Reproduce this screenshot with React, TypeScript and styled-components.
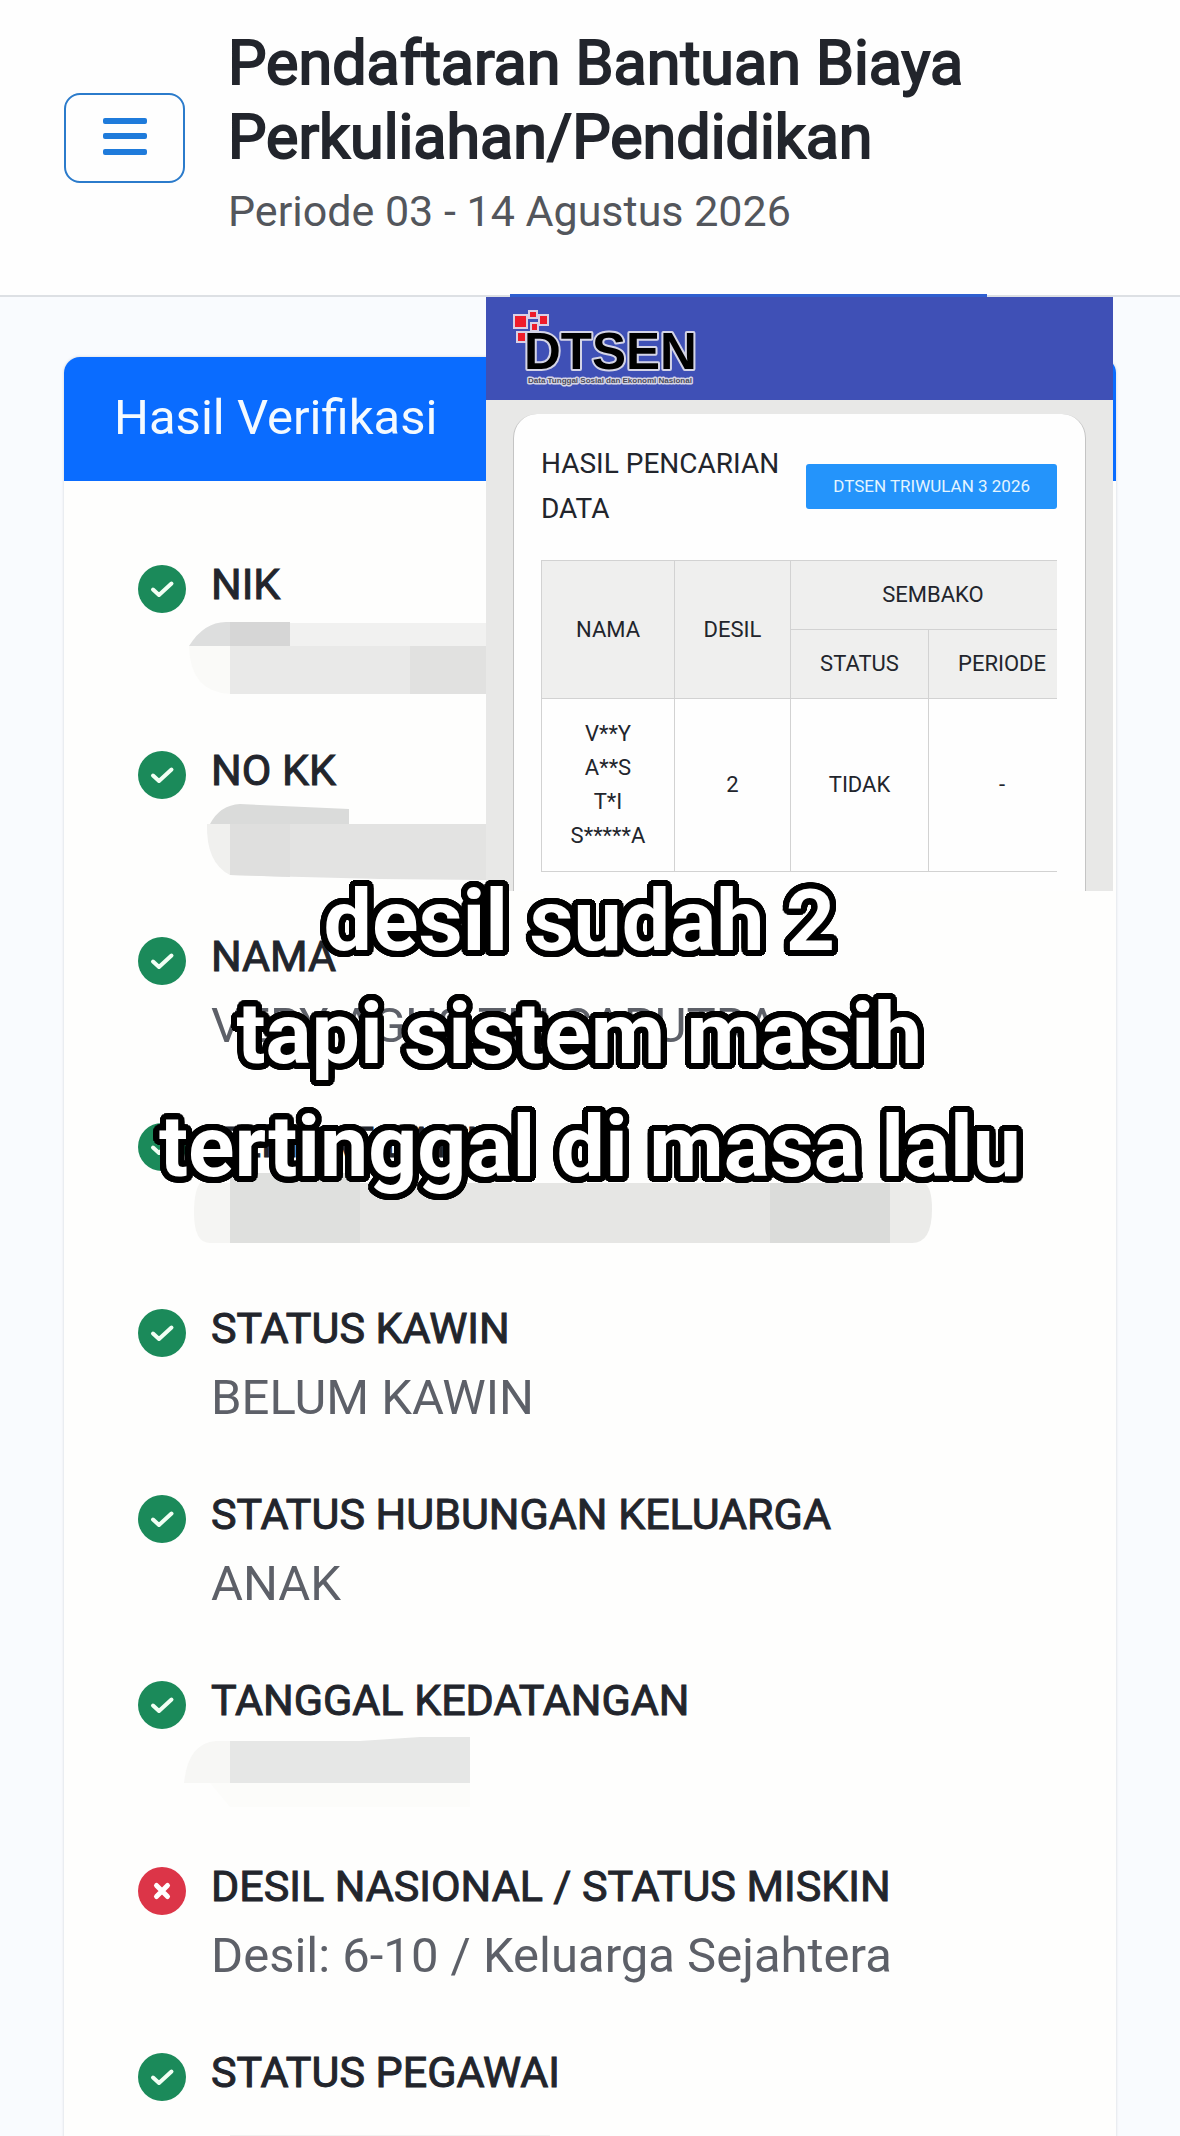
import React from "react";
import styled, { createGlobalStyle, css } from "styled-components";

const GlobalStyle = createGlobalStyle`
  *, *::before, *::after { box-sizing: border-box; }
  body {
    margin: 0;
    background: #f9fbfe;
    color: #22252c;
    font-family: Roboto, "Liberation Sans", sans-serif;
  }
`;

const Page = styled.div`
  position: relative;
  height: 100vh;
  overflow: hidden;
`;

const TopBar = styled.header`
  display: flex;
  align-items: center;
  gap: 43px;
  padding: 26px 64px 46px;
  background: #fefefe;
  border-bottom: 2px solid #dde0e4;
`;

const MenuButton = styled.button`
  display: flex;
  align-items: center;
  justify-content: center;
  flex: none;
  width: 121px;
  height: 90px;
  padding: 0;
  border: 2px solid #2b7bcb;
  border-radius: 16px;
  background: #fefefe;
  color: #1f7bdb;
`;

const Title = styled.h1`
  margin: 0;
  max-width: 800px;
  font-size: 61px;
  font-weight: 400;
  line-height: 74px;
  -webkit-text-stroke: 2px currentColor;
`;

const Subtitle = styled.p`
  margin: 0;
  font-size: 43px;
  line-height: 75px;
  color: #53565c;
`;

const Main = styled.main`
  position: relative;
  padding: 60px 64px;
`;

const Card = styled.section`
  border-radius: 16px;
  background: #fefefd;
  box-shadow: 0 0 3px #cfd3da;
`;

const CardHeader = styled.h2`
  margin: 0;
  padding: 24px 50px 26px;
  border-radius: 16px 16px 0 0;
  background: #0a6cff;
  color: #f4faff;
  font-size: 49px;
  font-weight: 400;
  line-height: 74px;
`;

const List = styled.ul`
  display: flex;
  flex-direction: column;
  gap: 48px;
  margin: 0;
  padding: 74px;
  list-style: none;
`;

const Item = styled.li`
  display: flex;
  gap: 25px;
`;

const StatusIcon = styled.svg`
  flex: none;
  width: 48px;
  height: 48px;
  margin-top: 10px;
`;

const ItemLabel = styled.div`
  font-size: 43px;
  font-weight: 400;
  line-height: 58px;
  white-space: nowrap;
  -webkit-text-stroke: 1px currentColor;
`;

const ItemValue = styled.div`
  position: relative;
  height: 80px;
  font-size: 49px;
  line-height: 82px;
  color: #5d6068;
  white-space: nowrap;
`;

const Smudge = styled.svg`
  position: absolute;
  top: -6px;
  left: -31px;
  width: 780px;
  height: 98px;
`;

const Panel = styled.aside`
  position: absolute;
  top: 0;
  left: 486px;
  right: 67px;
  height: 594px;
  display: flex;
  flex-direction: column;
  background: #e8e8e7;

  &::before {
    content: "";
    position: absolute;
    top: -3px;
    left: 24px;
    right: 126px;
    height: 3px;
    background: #2f5fd0;
  }
`;

const PanelBar = styled.div`
  flex: none;
  height: 103px;
  padding: 13px 26px;
  background: #3f50b6;
`;

const Logo = styled.svg`
  display: block;
  width: 190px;
  height: 80px;
  font-family: "Liberation Sans", Arial, sans-serif;
  font-weight: 700;
`;

const ResultCard = styled.div`
  flex: 1;
  margin: 14px 27px 0 27px;
  padding: 27px 28px 0 27px;
  border: 1px solid #c4c4c4;
  border-width: 0 1px;
  border-radius: 24px 24px 0 0;
  background: #fefefe;
`;

const ResultHead = styled.div`
  display: flex;
  align-items: center;
  justify-content: space-between;
  gap: 20px;
`;

const ResultTitle = styled.h3`
  margin: 0;
  font-size: 28px;
  font-weight: 400;
  line-height: 45px;
`;

const PeriodButton = styled.button`
  flex: none;
  height: 45px;
  padding: 0 27px;
  border: 0;
  border-radius: 3px;
  background: #2494fb;
  color: #e3f5ff;
  font-family: inherit;
  font-size: 17px;
`;

const TableScroll = styled.div`
  margin-top: 29px;
  overflow: hidden;
`;

const Table = styled.table`
  width: 534px;
  table-layout: fixed;
  border-collapse: collapse;
  font-size: 22px;
  line-height: 34px;
  text-align: center;
`;

const cell = css`
  border: 1px solid #d2d2d2;
  font-weight: 400;
`;

const Th = styled.th`
  ${cell}
  padding: 17px 0;
  background: #efefee;
`;

const Td = styled.td`
  ${cell}
  padding: 18px 0;
`;

const NameCell = styled(Td)`
  white-space: pre-line;
`;

const outline = (radius: number, color: string) =>
  Array.from({ length: 48 }, (_, i) => {
    const angle = (i * Math.PI) / 24;
    const x = Math.round(Math.cos(angle) * radius);
    const y = Math.round(Math.sin(angle) * radius);
    return `${x}px ${y}px 0 ${color}`;
  }).join(", ");

const Caption = styled.p`
  position: absolute;
  top: 864px;
  left: 0;
  right: 0;
  margin: 0;
  color: #fff;
  font-size: 86px;
  font-weight: 700;
  line-height: 113px;
  text-align: center;
  white-space: pre;
  text-shadow: ${outline(6, "#000")}, ${outline(3, "#000")};
`;

const smudges: Record<string, React.ReactNode> = {
  nik: (
    <>
      <path d="M9 39 Q24 15 46 15 H110 V39 Z" fill="#dddede" />
      <path d="M50 15 H110 V39 H50 Z" fill="#d6d6d6" />
      <path d="M110 16 H420 V39 H110 Z" fill="#f1f1f0" />
      <path d="M9 39 H50 V87 Q10 85 9 39 Z" fill="#fafaf8" />
      <path d="M50 39 H230 V87 H50 Z" fill="#e9e9e8" />
      <path d="M230 39 H420 V87 H230 Z" fill="#e1e1e0" />
    </>
  ),
  kk: (
    <>
      <path d="M30 31 Q40 12 60 11 L169 16 V31 Z" fill="#dadbda" />
      <path d="M27 31 H50 V82 Q26 70 27 31 Z" fill="#f0f0ee" />
      <path d="M50 31 H420 V88 L200 86 L50 82 Z" fill="#e3e3e2" />
      <path d="M50 31 H110 V84 L50 82 Z" fill="#dfdfde" />
    </>
  ),
  long: (
    <>
      <path d="M20 18 H50 V78 H30 Q14 78 14 48 Q14 26 20 18 Z" fill="#f5f5f3" />
      <path d="M50 8 H180 V78 H50 Z" fill="#dfe0de" />
      <path d="M180 18 H590 V78 H180 Z" fill="#e6e6e4" />
      <path d="M590 18 H710 V78 H590 Z" fill="#dbdcda" />
      <path d="M710 18 H744 Q752 22 752 44 Q752 78 732 78 H710 Z" fill="#ebebe9" />
    </>
  ),
  short: (
    <>
      <path d="M4 60 Q8 20 36 18 H50 V60 Z" fill="#f7f7f5" />
      <path d="M50 18 H180 L240 14 H290 V60 H50 Z" fill="#e6e7e6" />
      <path d="M30 60 H290 V84 H50 Z" fill="#fcfcfa" />
    </>
  ),
  last: <path d="M50 40 H370 V70 H50 Z" fill="#f2f2f0" />,
};

type Row = { label: string; value?: string; smudge?: string; failed?: boolean };

const rows: Row[] = [
  { label: "NIK", smudge: "nik" },
  { label: "NO KK", smudge: "kk" },
  { label: "NAMA", value: "VERY AGUS TRI SAPUTRA" },
  { label: "TEMPAT LAHIR", smudge: "long" },
  { label: "STATUS KAWIN", value: "BELUM KAWIN" },
  { label: "STATUS HUBUNGAN KELUARGA", value: "ANAK" },
  { label: "TANGGAL KEDATANGAN", smudge: "short" },
  { label: "DESIL NASIONAL / STATUS MISKIN", value: "Desil: 6-10 / Keluarga Sejahtera", failed: true },
  { label: "STATUS PEGAWAI", smudge: "last" },
];

const Status = ({ failed }: { failed?: boolean }) => (
  <StatusIcon viewBox="0 0 48 48" fill="none" strokeLinecap="round" strokeLinejoin="round">
    <circle cx="24" cy="24" r="24" fill={failed ? "#dc3548" : "#1b8a5a"} />
    {failed ? (
      <path d="M18.5 18.5 L29.5 29.5 M29.5 18.5 L18.5 29.5" stroke="#fff" strokeWidth="5" />
    ) : (
      <path d="M15 24.5 L21 30 L33.5 18.5" stroke="#f2fff4" strokeWidth="4" />
    )}
  </StatusIcon>
);

const DtsenLogo = () => (
  <Logo viewBox="0 0 190 80">
    <g fill="#ee1c2a" stroke="#d9d0e4" strokeWidth="2">
      <rect x="2" y="5" width="13" height="13" />
      <rect x="17" y="1" width="8" height="7" />
      <rect x="27" y="5" width="9" height="10" />
      <rect x="19" y="13" width="7" height="8" />
      <rect x="5" y="22" width="9" height="10" />
    </g>
    <g fill="#000" stroke="#d4d4e6" strokeLinejoin="round" paintOrder="stroke">
      <text x="12" y="59" fontSize="51" strokeWidth="4">DTSEN</text>
      <text x="16" y="73" fontSize="8" strokeWidth="3" fill="#4a4a58">
        Data Tunggal Sosial dan Ekonomi Nasional
      </text>
    </g>
  </Logo>
);

export default function App() {
  return (
    <Page>
      <GlobalStyle />
      <TopBar>
        <MenuButton type="button" aria-label="Menu">
          <svg width="44" height="40" viewBox="0 0 44 40" fill="currentColor">
            <rect y="0" width="44" height="6" rx="2" />
            <rect y="15" width="44" height="6" rx="2" />
            <rect y="31" width="44" height="6" rx="2" />
          </svg>
        </MenuButton>
        <div>
          <Title>Pendaftaran Bantuan Biaya Perkuliahan/Pendidikan</Title>
          <Subtitle>Periode 03 - 14 Agustus 2026</Subtitle>
        </div>
      </TopBar>
      <Main>
        <Card>
          <CardHeader>Hasil Verifikasi</CardHeader>
          <List>
            {rows.map((row) => (
              <Item key={row.label}>
                <Status failed={row.failed} />
                <div>
                  <ItemLabel>{row.label}</ItemLabel>
                  <ItemValue>
                    {row.value}
                    {row.smudge && <Smudge viewBox="0 0 780 98">{smudges[row.smudge]}</Smudge>}
                  </ItemValue>
                </div>
              </Item>
            ))}
          </List>
        </Card>
        <Panel>
          <PanelBar>
            <DtsenLogo />
          </PanelBar>
          <ResultCard>
            <ResultHead>
              <ResultTitle>HASIL PENCARIAN DATA</ResultTitle>
              <PeriodButton type="button">DTSEN TRIWULAN 3 2026</PeriodButton>
            </ResultHead>
            <TableScroll>
              <Table>
                <colgroup>
                  <col width="133" />
                  <col width="116" />
                  <col width="138" />
                  <col width="147" />
                </colgroup>
                <thead>
                  <tr>
                    <Th rowSpan={2}>NAMA</Th>
                    <Th rowSpan={2}>DESIL</Th>
                    <Th colSpan={2}>SEMBAKO</Th>
                  </tr>
                  <tr>
                    <Th>STATUS</Th>
                    <Th>PERIODE</Th>
                  </tr>
                </thead>
                <tbody>
                  <tr>
                    <NameCell>{"V**Y\nA**S\nT*I\nS*****A"}</NameCell>
                    <Td>2</Td>
                    <Td>TIDAK</Td>
                    <Td>-</Td>
                  </tr>
                </tbody>
              </Table>
            </TableScroll>
          </ResultCard>
        </Panel>
      </Main>
      <Caption>{"desil sudah 2 \ntapi sistem masih \ntertinggal di masa lalu"}</Caption>
    </Page>
  );
}
